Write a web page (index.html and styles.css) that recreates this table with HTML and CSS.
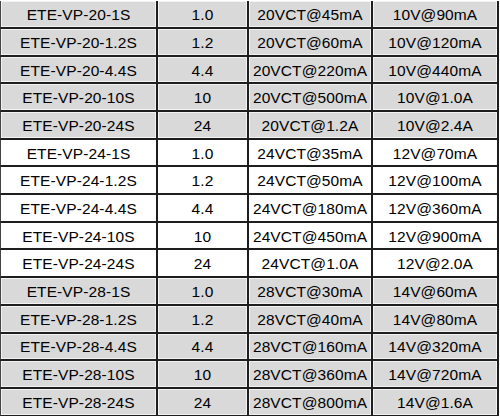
FILE: index.html
```html
<!DOCTYPE html>
<html lang="en">
<head>
  <meta charset="UTF-8">
  <title>ETE-VP Transformer Ratings</title>
  <link rel="stylesheet" href="styles.css">
</head>
<body>
  <div class="table" id="table"></div>

  <script>
    const rows = [
      ["ETE-VP-20-1S", "1.0", "20VCT@45mA", "10V@90mA"],
      ["ETE-VP-20-1.2S", "1.2", "20VCT@60mA", "10V@120mA"],
      ["ETE-VP-20-4.4S", "4.4", "20VCT@220mA", "10V@440mA"],
      ["ETE-VP-20-10S", "10", "20VCT@500mA", "10V@1.0A"],
      ["ETE-VP-20-24S", "24", "20VCT@1.2A", "10V@2.4A"],
      ["ETE-VP-24-1S", "1.0", "24VCT@35mA", "12V@70mA"],
      ["ETE-VP-24-1.2S", "1.2", "24VCT@50mA", "12V@100mA"],
      ["ETE-VP-24-4.4S", "4.4", "24VCT@180mA", "12V@360mA"],
      ["ETE-VP-24-10S", "10", "24VCT@450mA", "12V@900mA"],
      ["ETE-VP-24-24S", "24", "24VCT@1.0A", "12V@2.0A"],
      ["ETE-VP-28-1S", "1.0", "28VCT@30mA", "14V@60mA"],
      ["ETE-VP-28-1.2S", "1.2", "28VCT@40mA", "14V@80mA"],
      ["ETE-VP-28-4.4S", "4.4", "28VCT@160mA", "14V@320mA"],
      ["ETE-VP-28-10S", "10", "28VCT@360mA", "14V@720mA"],
      ["ETE-VP-28-24S", "24", "28VCT@800mA", "14V@1.6A"]
    ];

    const table = document.getElementById("table");
    rows.forEach((row, i) => {
      // groups of five: grey, white, grey
      const shade = Math.floor(i / 5) === 1 ? "white" : "grey";
      row.forEach((text, j) => {
        const cell = document.createElement("div");
        cell.className = "cell " + shade + (j === 0 ? " first" : "");
        cell.textContent = text;
        table.appendChild(cell);
      });
    });
  </script>
</body>
</html>
```

FILE: styles.css
```css
body {
  margin: 0;
  background-color: #fff;
  font-family: "Liberation Sans", Arial, sans-serif;
  overflow: hidden;
}
.table {
  display: grid;
  grid-template-columns: 158px 91px 124px 126px;
  grid-auto-rows: 27.7px;
  padding-top: 1.3px;
}
.cell {
  display: flex;
  align-items: center;
  justify-content: center;
  padding-top: 2px;
  box-sizing: border-box;
  border-right: 2px solid #1e1e1e;
  border-bottom: 2px solid #1e1e1e;
  font-size: 15.5px;
  letter-spacing: 0.1px;
  color: #000;
  white-space: nowrap;
}
.cell.first {
  border-left: 1px solid #444;
}
.grey {
  background-color: #d9d9d9;
  box-shadow: inset 0 0 0 1px #f2f2f2;
}
.white {
  background-color: #fff;
}
```
